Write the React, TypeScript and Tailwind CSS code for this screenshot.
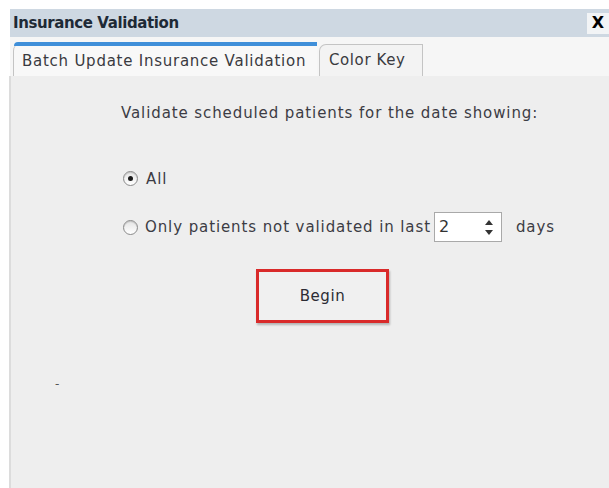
import React from "react";

const ui = { fontFamily: '"DejaVu Sans", Verdana, sans-serif' };

function Radio({ checked }: { checked?: boolean }) {
  return (
    <span className="flex h-[15px] w-[15px] items-center justify-center rounded-full border border-[#8a8a8a] bg-gradient-to-b from-[#e4e4e4] to-white shadow-[inset_0_1px_1px_rgba(0,0,0,0.15)]">
      {checked && <span className="h-[5px] w-[5px] rounded-full bg-[#1a1a1a]" />}
    </span>
  );
}

export default function App() {
  return (
    <div className="flex h-[488px] w-[609px] flex-col overflow-hidden bg-white text-[#3c3c44]" style={ui}>
      {/* dialog title */}
      <div className="mt-[9px] ml-[10px] flex h-[28px] items-center justify-between bg-[#ced8e2] pl-[3px]">
        <span className="text-[15px] font-bold tracking-[-0.4px] text-[#1e2a36]">Insurance Validation</span>
        <span className="flex h-[21px] w-[22px] items-center justify-center bg-[#f2f4f6] text-[16px] font-bold text-black">
          X
        </span>
      </div>

      {/* tabs */}
      <div className="ml-[10px] flex h-[39px] items-end bg-[#f6f6f6] pl-[3px] pt-[5px]">
        <div className="flex h-full w-[304px] flex-col rounded-tl-[9px] border-l border-[#c4c4c4] bg-[#f8f8f8]">
          <div className="h-[4px] rounded-tl-[9px] bg-[#3f8fd9]" />
          <div className="flex flex-1 items-center pl-[8px] text-[15px] tracking-[0.75px] text-[#3a3a40]">
            Batch Update Insurance Validation
          </div>
        </div>
        <div className="ml-[2px] flex h-[32px] w-[104px] items-center rounded-tl-[7px] border-t border-r border-l border-[#c4c4c4] bg-[#f3f3f3] pl-[9px] text-[15px] tracking-[0.6px] text-[#3a3a40]">
          Color Key
        </div>
      </div>

      {/* tab body */}
      <div className="ml-[9px] flex flex-1 flex-col border-l-[2px] border-[#dcdcdc] bg-[#eeeeee] text-[15px] tracking-[0.9px]">
        <div className="mt-[26px] pl-[110px]">Validate scheduled patients for the date showing:</div>

        <div className="mt-[43px] flex items-center gap-[8px] pl-[112px]">
          <Radio checked />
          <span>All</span>
        </div>

        <div className="mt-[22px] flex items-center pl-[112px]">
          <Radio />
          <span className="ml-[7px]">Only patients not validated in last</span>
          <span className="ml-[3px] flex h-[30px] w-[68px] items-center justify-between border border-[#a9a9a9] bg-white pl-[4px] pr-[8px]">
            <span className="text-[16px] tracking-normal text-[#333]">2</span>
            <span className="flex flex-col items-center gap-[5px]">
              <svg width="8" height="5" viewBox="0 0 8 5"><path d="M4 0 L8 5 L0 5 Z" fill="#333" /></svg>
              <svg width="8" height="5" viewBox="0 0 8 5"><path d="M0 0 L8 0 L4 5 Z" fill="#333" /></svg>
            </span>
          </span>
          <span className="ml-[14px]">days</span>
        </div>

        <div className="mt-[27px] flex pl-[245px]">
          <button className="flex h-[54px] w-[133px] items-center justify-center border-[3px] border-[#d92a2a] bg-[#f0f0f0] text-[15px] tracking-[0.6px] text-[#2c2c34] shadow-[1px_2px_2px_rgba(0,0,0,0.25)]">
            Begin
          </button>
        </div>

        <div className="mt-[55px] pl-[44px] text-[12px] leading-none text-[#555]">-</div>
      </div>
    </div>
  );
}
